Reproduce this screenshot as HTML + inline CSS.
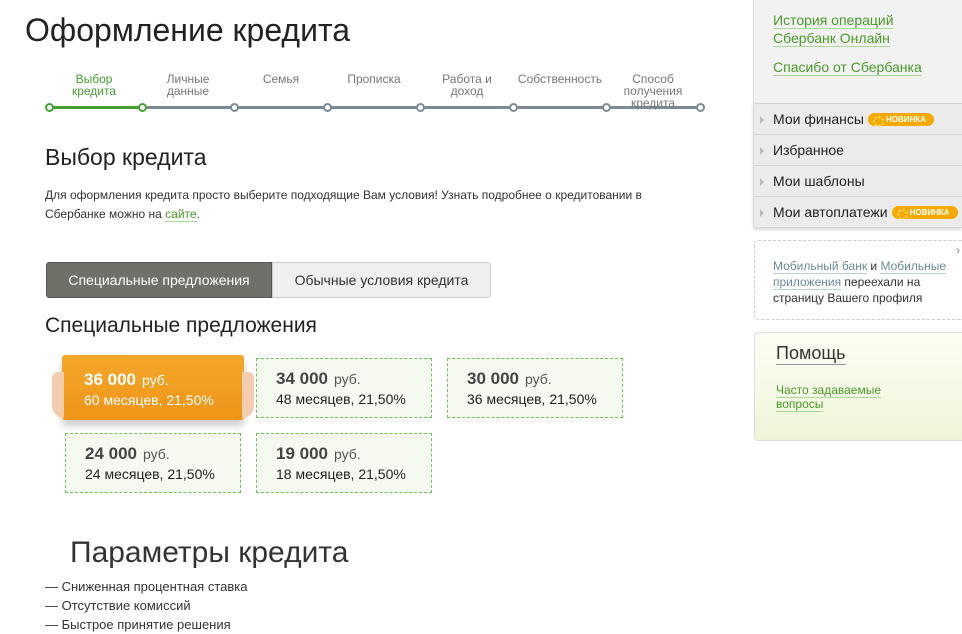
<!DOCTYPE html>
<html><head><meta charset="utf-8"><style>
*{margin:0;padding:0;box-sizing:border-box}
body{width:962px;height:627px;overflow:hidden;background:#fff;font-family:"Liberation Sans","Noto Sans CJK SC",sans-serif;color:#333;position:relative}
.a{position:absolute}
h1{position:absolute;left:25px;top:12px;font-size:32px;font-weight:normal;color:#222}
.step{position:absolute;top:73px;font-size:12px;color:#777;text-align:center;line-height:12px;width:90px}
.dot{position:absolute;top:103px;width:9px;height:9px;border:2px solid #7a8a96;border-radius:50%;background:#fff}
.card{position:absolute;width:176px;height:60px;border:1px dashed #6cc25a;background:#f6f9f0;padding:10px 0 0 19px}
.card b{font-size:17px;color:#444}
.card span{font-size:14px;color:#555;margin-left:6px}
.card div{font-size:14px;color:#222;margin-top:2px}
.side{position:absolute;left:753px;width:209px;border-left:1px solid #ddd}
.mi{height:31px;border-bottom:1px solid #d6d6d6;background:#ebebeb;font-size:14px;color:#222;padding:7px 0 0 19px;position:relative}
.mi:before{content:"";position:absolute;left:6px;top:12px;border-left:4px solid #bbb;border-top:4px solid transparent;border-bottom:4px solid transparent}
.new{display:inline-block;background:#f8a900;color:#fff;font-size:8px;font-weight:bold;border-radius:8px;padding:2px 8px 2px 18px;margin-left:4px;vertical-align:2px;position:relative}
.new:before{content:"";position:absolute;left:5px;top:3px;width:7px;height:7px;border-radius:50%;border:2px dotted #ffe27a}
a{color:#4a9a2a;text-decoration:none;border-bottom:1px solid #a8d89a}
</style></head><body>
<h1>Оформление кредита</h1>
<div class="a" style="left:50px;top:106px;width:92px;height:3px;background:#46a030"></div>
<div class="a" style="left:142px;top:106px;width:558px;height:3px;background:#7a8a96"></div>
<div class="dot" style="left:45px;border-color:#46a030"></div>
<div class="dot" style="left:138px;border-color:#46a030"></div>
<div class="dot" style="left:230px"></div>
<div class="dot" style="left:323px"></div>
<div class="dot" style="left:416px"></div>
<div class="dot" style="left:509px"></div>
<div class="dot" style="left:602px"></div>
<div class="dot" style="left:696px"></div>
<div class="step" style="left:49px;color:#46a030">Выбор<br>кредита</div>
<div class="step" style="left:143px">Личные<br>данные</div>
<div class="step" style="left:236px">Семья</div>
<div class="step" style="left:329px">Прописка</div>
<div class="step" style="left:422px">Работа и<br>доход</div>
<div class="step" style="left:515px">Собственность</div>
<div class="step" style="left:608px">Способ<br>получения<br>кредита</div>
<div class="a" style="left:45px;top:144px;font-size:23px;color:#222">Выбор кредита</div>
<div class="a" style="left:45px;top:186px;width:660px;font-size:12px;line-height:19px;color:#333">Для оформления кредита просто выберите подходящие Вам условия! Узнать подробнее о кредитовании в Сбербанке можно на <a>сайте</a>.</div>
<div class="a" style="left:46px;top:262px;width:226px;height:36px;background:#707068;border:1px solid #555;border-radius:3px 0 0 3px;color:#fff;font-size:14px;text-align:center;line-height:34px">Специальные предложения</div>
<div class="a" style="left:272px;top:262px;width:219px;height:36px;background:#efefef;border:1px solid #ccc;border-radius:0 3px 3px 0;color:#333;font-size:14px;text-align:center;line-height:34px">Обычные условия кредита</div>
<div class="a" style="left:45px;top:314px;font-size:21px;color:#222">Специальные предложения</div>
<div class="a" style="left:62px;top:355px;width:182px;height:65px;background:linear-gradient(#f4a82a,#ef9418);border-radius:3px;box-shadow:0 6px 8px rgba(0,0,0,.2);padding:15px 0 0 22px;color:#fff">
<b style="font-size:17px">36 000</b><span style="font-size:14px;margin-left:6px">руб.</span><div style="font-size:14px;margin-top:2px">60 месяцев, 21,50%</div></div>
<div class="a" style="left:52px;top:372px;width:12px;height:46px;background:#f4cdb0;border-radius:6px 0 0 12px"></div>
<div class="a" style="left:242px;top:372px;width:12px;height:46px;background:#f4cdb0;border-radius:0 6px 12px 0"></div>
<div class="card" style="left:256px;top:358px"><b>34 000</b><span>руб.</span><div>48 месяцев, 21,50%</div></div>
<div class="card" style="left:447px;top:358px"><b>30 000</b><span>руб.</span><div>36 месяцев, 21,50%</div></div>
<div class="card" style="left:65px;top:433px"><b>24 000</b><span>руб.</span><div>24 месяцев, 21,50%</div></div>
<div class="card" style="left:256px;top:433px"><b>19 000</b><span>руб.</span><div>18 месяцев, 21,50%</div></div>
<div class="a" style="left:70px;top:536px;font-size:30px;color:#333">Параметры кредита</div>
<div class="a" style="left:45px;top:577px;font-size:13px;line-height:19px;color:#333">— Сниженная процентная ставка<br>— Отсутствие комиссий<br>— Быстрое принятие решения</div>
<div class="side" style="top:0;height:104px;background:#f2f2f2;padding:11px 0 0 19px;font-size:14px;line-height:18px">
<a>История операций</a><br><a>Сбербанк Онлайн</a><br><div style="height:11px"></div><a>Спасибо от Сбербанка</a></div>
<div class="side" style="top:103px;border-top:1px solid #d6d6d6;box-shadow:0 2px 3px rgba(0,0,0,.15)">
<div class="mi">Мои финансы<span class="new">НОВИНКА</span></div>
<div class="mi">Избранное</div>
<div class="mi">Мои шаблоны</div>
<div class="mi">Мои автоплатежи<span class="new">НОВИНКА</span></div>
</div>
<div class="a" style="left:754px;top:240px;width:208px;height:80px;border:1px dashed #ccc;border-right:none;border-radius:4px 0 0 4px;padding:17px 0 0 18px;font-size:12px;line-height:16px;color:#333"><a style="color:#6a8a9a;border-color:#b8d0d8">Мобильный банк</a> и <a style="color:#6a8a9a;border-color:#b8d0d8">Мобильные приложения</a> переехали на страницу Вашего профиля</div>
<div class="a" style="left:956px;top:243px;font-size:12px;color:#888">›</div>
<div class="a" style="left:754px;top:332px;width:208px;height:109px;border:1px solid #ddd;border-right:none;border-radius:4px 0 0 4px;background:linear-gradient(#fdfdf4,#eef5d8);padding:10px 0 0 21px">
<div style="font-size:18px;color:#333;display:inline-block;border-bottom:1px solid #999">Помощь</div>
<div style="margin-top:18px;font-size:12px;line-height:14px"><a>Часто задаваемые</a><br><a>вопросы</a></div></div>
</body></html>
